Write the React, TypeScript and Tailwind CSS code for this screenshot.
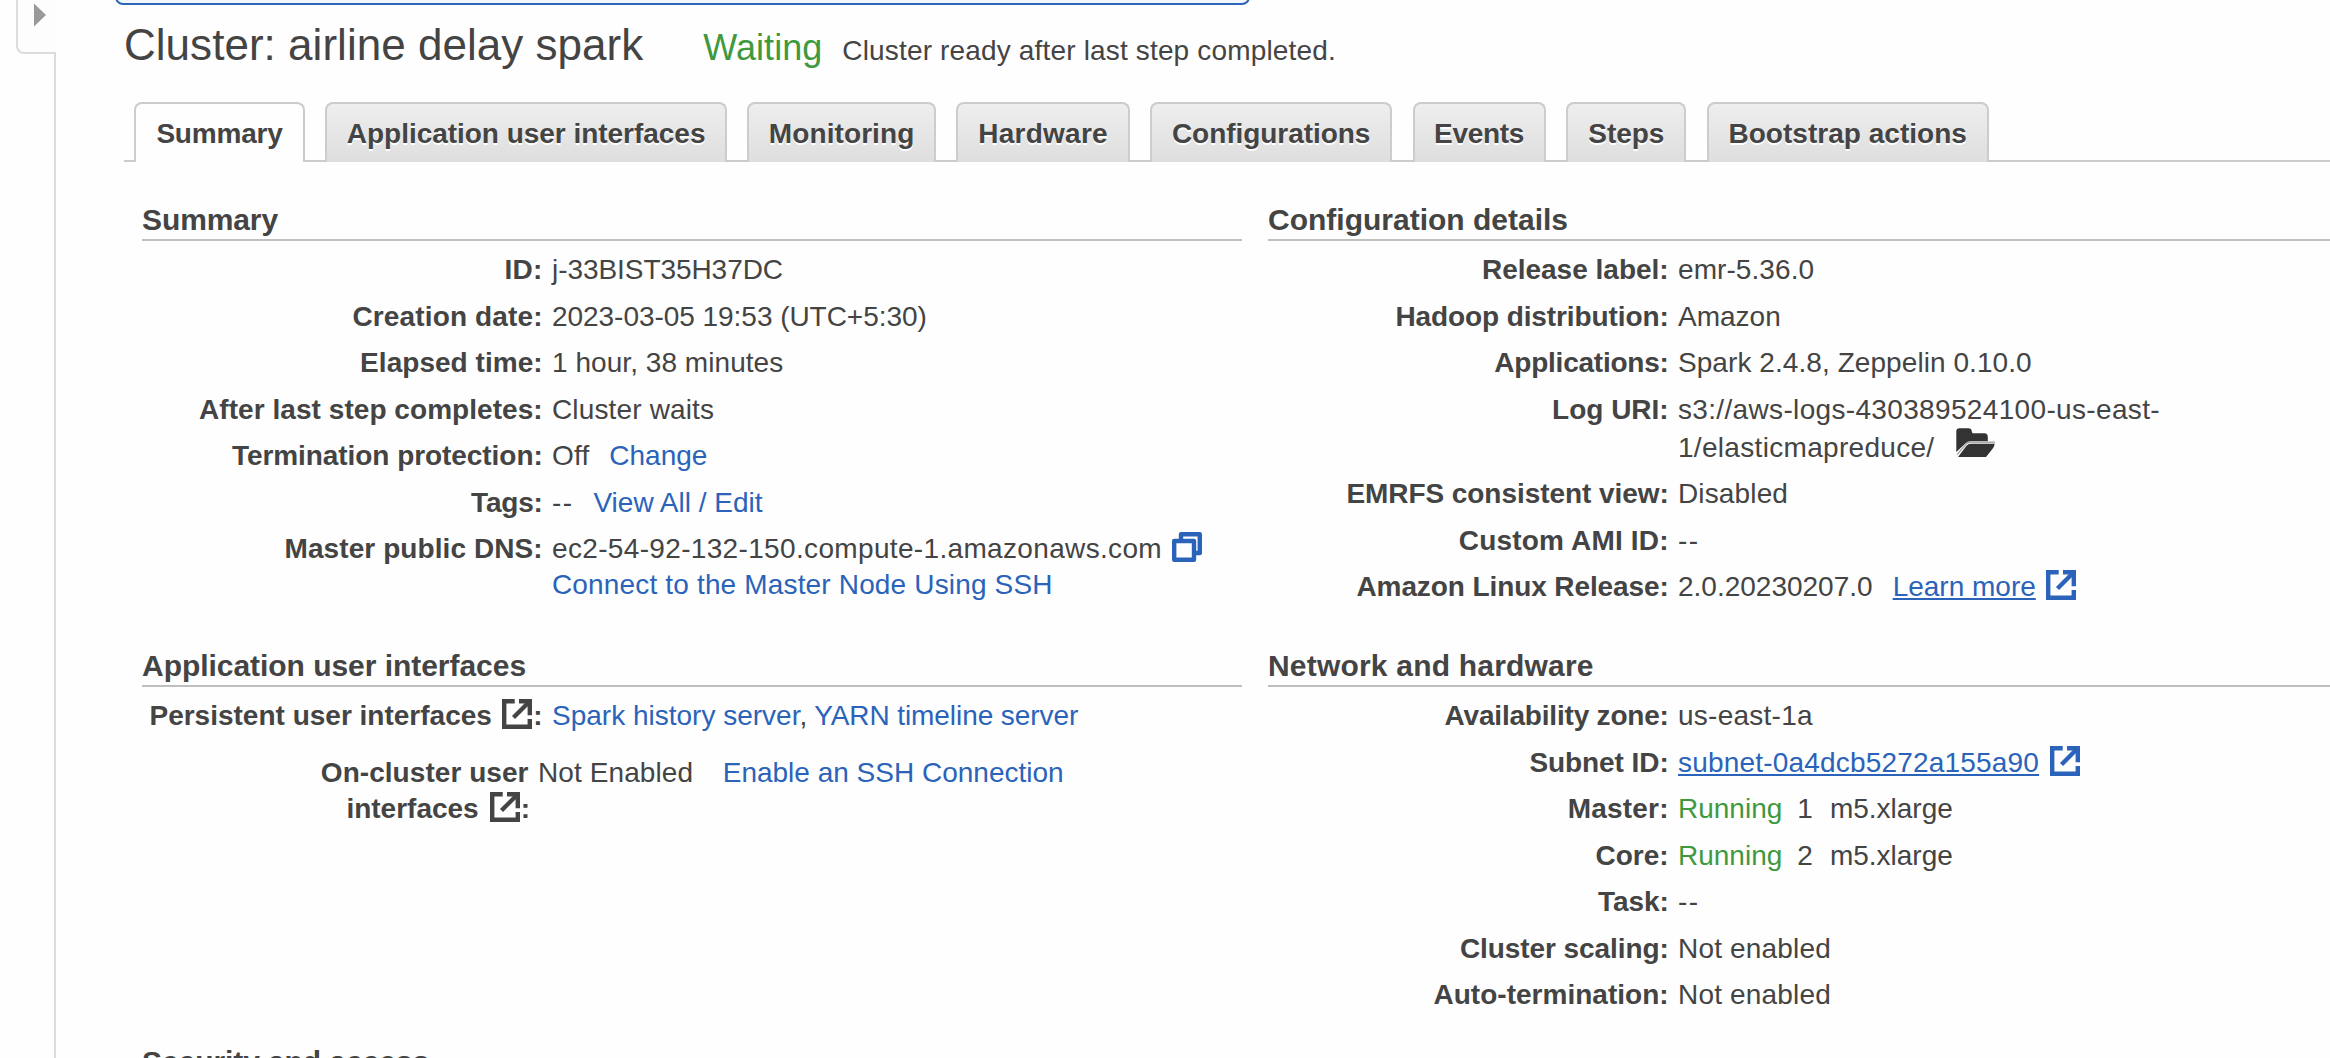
import type { ReactNode } from "react";

function ExternalIcon({ className = "" }: { className?: string }) {
  return (
    <svg viewBox="0 0 30 30" className={`inline-block h-[30px] w-[30px] align-[-4px] ${className}`} fill="none" stroke="currentColor" strokeWidth="4">
      <path d="M12.7 2.2H2.2V27.8H27.8V20" strokeWidth="4.4" />
      <path d="M17 2.2H27.8V16.3" strokeWidth="4.4" />
      <path d="M27.5 2.5L11.5 18.5" strokeWidth="4.4" />
    </svg>
  );
}

function CopyIcon({ className = "" }: { className?: string }) {
  return (
    <svg viewBox="0 0 30 30" className={`inline-block h-[30px] w-[30px] align-[-4px] ${className}`} fill="none" stroke="currentColor" strokeWidth="4.4" strokeLinejoin="round">
      <path d="M9 7V2.2H27.8V21H23" />
      <rect x="2.2" y="9" width="19.8" height="18.8" fill="#fff" />
    </svg>
  );
}

function FolderIcon({ className = "" }: { className?: string }) {
  return (
    <svg viewBox="0 0 39 29" className={`-mt-1 inline-block h-[29px] w-[39px] text-[#333] ${className}`} fill="currentColor">
      <path d="M0.3 24V3.5Q0.3 0.3 3.5 0.3H12.5Q15.5 0.3 15.8 3.5L16.5 5.3H28.5Q31.8 5.5 31.8 9V13.2H15Q11.5 13.2 9.3 15.4L0.3 24Z" />
      <path d="M2 29L10.5 17.8Q12 15.8 15 15.8H38.8Q38.2 19 36 21.5L30 29Z" />
      <path d="M1.2 26.5L10 16Q11.8 14.2 14.5 14.2H39" fill="none" stroke="#aaa" strokeWidth="1.5" />
    </svg>
  );
}

function Link({ children, className = "" }: { children: ReactNode; className?: string }) {
  return (
    <a href="#" className={`text-[#2a63b9] ${className}`}>
      {children}
    </a>
  );
}

function Row({ label, labelClass = "", children }: { label: ReactNode; labelClass?: string; children: ReactNode }) {
  return (
    <div className="mb-[10.5px] flex gap-[9.3px] whitespace-nowrap text-[28px] leading-[36px]">
      <dt className={`w-[400.7px] shrink-0 text-right font-bold ${labelClass}`}>{label}</dt>
      <dd>{children}</dd>
    </div>
  );
}

function Section({ title, titleClass = "", children }: { title: string; titleClass?: string; children?: ReactNode }) {
  return (
    <section>
      <h2 className={`mb-[11px] border-b-2 border-[#bfbfbf] pb-px text-[30px] leading-[36px] font-bold ${titleClass}`}>{title}</h2>
      <dl>{children}</dl>
    </section>
  );
}

const tabs = [
  { name: "Summary", style: "w-[171px] tracking-[-0.2px]" },
  { name: "Application user interfaces", style: "w-[401.5px] tracking-[-0.03px]" },
  { name: "Monitoring", style: "w-[188.7px] tracking-[0.09px]" },
  { name: "Hardware", style: "w-[173.4px] tracking-[0.25px]" },
  { name: "Configurations", style: "w-[242px] tracking-[-0.05px]" },
  { name: "Events", style: "w-[133.2px] tracking-[-0.3px]" },
  { name: "Steps", style: "w-[120.3px] tracking-[-0.07px]" },
  { name: "Bootstrap actions", style: "w-[281.8px] tracking-[0.02px]" },
];

function Sidebar() {
  return (
    <aside className="flex w-[56px] shrink-0 flex-col">
      <div className="ml-4 h-[54px] rounded-bl-[8px] border-b-2 border-l-2 border-[#dcdcdc] bg-[#fdfdfd] pt-[3px] pl-4">
        <svg viewBox="0 0 12 24" className="block h-[24px] w-[12px]" fill="#999">
          <path d="M0 0.5L12 12L0 23.5Z" />
        </svg>
      </div>
      <div className="flex-1 border-r-2 border-[#dcdcdc]" />
    </aside>
  );
}

function NodeRow({ label, labelClass, count }: { label: string; labelClass: string; count: string }) {
  return (
    <Row label={label} labelClass={labelClass}>
      <span className="text-[#3f993f]">Running</span>
      <span className="ml-[15px]">{count}</span>
      <span className="ml-[17px]">m5.xlarge</span>
    </Row>
  );
}

export default function App() {
  return (
    <div className="flex h-[1058px] w-[2330px] overflow-hidden bg-[#fefefe] font-['Liberation_Sans',Arial,sans-serif] text-[#444]">
      <Sidebar />
      <main className="min-w-0 flex-1">
        <div className="ml-[59px] h-[5px] w-[1135px] overflow-hidden">
          <div className="-mt-5 h-[25px] rounded-b-[8px] border-2 border-[#2a66b5] bg-[#f1f7fc]" />
        </div>

        <header className="ml-[68px] flex h-[97px] items-baseline pt-4 whitespace-nowrap">
          <h1 className="text-[44px] leading-[48px] tracking-[0.03px]">Cluster: airline delay spark</h1>
          <span className="ml-[60px] text-[36px] leading-[36px] tracking-[0.05px] text-[#3f993f]">Waiting</span>
          <span className="ml-[20px] text-[28px] leading-[36px] tracking-[0.16px]">Cluster ready after last step completed.</span>
        </header>

        <nav className="ml-[68px] flex gap-[20.4px] pl-[10px] shadow-[inset_0_-2px_#ccc]">
          {tabs.map((tab, i) => (
            <a
              key={tab.name}
              href="#"
              className={`h-[60px] rounded-t-[8px] border-2 border-b-0 border-[#ccc] pt-[12px] text-center text-[28px] leading-[36px] font-bold whitespace-nowrap ${
                i === 0 ? "bg-[#fefefe]" : "bg-linear-to-b from-[#eeeeee] to-[#dedede] [text-shadow:0_2px_0_#fff]"
              } ${tab.style}`}
            >
              {tab.name}
            </a>
          ))}
        </nav>

        <div className="mt-10 ml-[86px] grid grid-cols-[1100px_1fr] grid-rows-[446px_396px_60px] gap-x-[26px]">
          <Section title="Summary" titleClass="tracking-[-0.1px]">
            <Row label="ID:" labelClass="tracking-[0.3px]">
              <span className="tracking-[-0.06px]">j-33BIST35H37DC</span>
            </Row>
            <Row label="Creation date:" labelClass="tracking-[0.14px]">
              <span className="tracking-[-0.04px]">2023-03-05 19:53 (UTC+5:30)</span>
            </Row>
            <Row label="Elapsed time:" labelClass="tracking-[0.04px]">
              <span className="tracking-[0.05px]">1 hour, 38 minutes</span>
            </Row>
            <Row label="After last step completes:" labelClass="tracking-[0.05px]">
              <span className="tracking-[0.15px]">Cluster waits</span>
            </Row>
            <Row label="Termination protection:" labelClass="tracking-[-0.06px]">
              <span className="tracking-[0.17px]">Off</span>
              <Link className="ml-[20px]">Change</Link>
            </Row>
            <Row label="Tags:" labelClass="tracking-[-0.2px]">
              <span className="tracking-[1.4px]">--</span>
              <Link className="ml-[20px]">View All / Edit</Link>
            </Row>
            <Row label="Master public DNS:" labelClass="tracking-[0.08px]">
              <div className="tracking-[0.34px]">
                ec2-54-92-132-150.compute-1.amazonaws.com
                <CopyIcon className="ml-[10px] text-[#2a63b9]" />
              </div>
              <Link className="block tracking-[0.16px]">Connect to the Master Node Using SSH</Link>
            </Row>
          </Section>

          <Section title="Configuration details">
            <Row label="Release label:">
              <span className="tracking-[0.08px]">emr-5.36.0</span>
            </Row>
            <Row label="Hadoop distribution:" labelClass="tracking-[-0.1px]">
              Amazon
            </Row>
            <Row label="Applications:" labelClass="tracking-[-0.23px]">
              <span className="tracking-[0.07px]">Spark 2.4.8, Zeppelin 0.10.0</span>
            </Row>
            <Row label="Log URI:">
              <div className="tracking-[0.34px]">s3://aws-logs-430389524100-us-east-</div>
              <div className="mt-[2px] tracking-[0.31px]">
                1/elasticmapreduce/
                <FolderIcon className="ml-[21.5px] align-baseline" />
              </div>
            </Row>
            <Row label="EMRFS consistent view:" labelClass="tracking-[-0.06px]">
              <span className="tracking-[0.14px]">Disabled</span>
            </Row>
            <Row label="Custom AMI ID:" labelClass="tracking-[0.18px]">
              <span className="tracking-[1.4px]">--</span>
            </Row>
            <Row label="Amazon Linux Release:" labelClass="tracking-[-0.1px]">
              <span>2.0.20230207.0</span>
              <Link className="ml-[20px] underline decoration-2 underline-offset-[2px]">Learn more</Link>
              <ExternalIcon className="ml-[10.5px] text-[#2a63b9]" />
            </Row>
          </Section>

          <Section title="Application user interfaces" titleClass="tracking-[-0.04px]">
            <Row
              label={
                <>
                  Persistent user interfaces
                  <ExternalIcon className="mr-px ml-[10.5px]" />:
                </>
              }
            >
              <Link>Spark history server</Link>,
              <Link className="ml-[7px] tracking-[-0.08px]">YARN timeline server</Link>
            </Row>
            <div className="mt-[21px] flex gap-[8px] text-[28px] leading-[36px] whitespace-nowrap">
              <dt className="w-[388px] text-right font-bold">
                <div className="pr-[1.5px] tracking-[0.05px]">On-cluster user</div>
                <div>
                  interfaces
                  <ExternalIcon className="mr-px ml-[11px]" />:
                </div>
              </dt>
              <dd>
                <span className="tracking-[0.1px]">Not Enabled</span>
                <Link className="ml-[29.5px]">Enable an SSH Connection</Link>
              </dd>
            </div>
          </Section>

          <Section title="Network and hardware" titleClass="tracking-[0.2px]">
            <Row label="Availability zone:" labelClass="tracking-[-0.2px]">
              <span className="tracking-[0.25px]">us-east-1a</span>
            </Row>
            <Row label="Subnet ID:" labelClass="tracking-[-0.07px]">
              <Link className="tracking-[0.19px] underline decoration-2 underline-offset-[2px]">subnet-0a4dcb5272a155a90</Link>
              <ExternalIcon className="ml-[10.5px] text-[#2a63b9]" />
            </Row>
            <NodeRow label="Master:" labelClass="tracking-[0.2px]" count="1" />
            <NodeRow label="Core:" labelClass="tracking-[0.03px]" count="2" />
            <Row label="Task:" labelClass="tracking-[-0.1px]">
              <span className="tracking-[1.4px]">--</span>
            </Row>
            <Row label="Cluster scaling:" labelClass="tracking-[-0.08px]">
              <span className="tracking-[0.18px]">Not enabled</span>
            </Row>
            <Row label="Auto-termination:" labelClass="tracking-[0.02px]">
              <span className="tracking-[0.18px]">Not enabled</span>
            </Row>
          </Section>

          <Section title="Security and access" titleClass="tracking-[-0.08px]" />
        </div>
      </main>
    </div>
  );
}
